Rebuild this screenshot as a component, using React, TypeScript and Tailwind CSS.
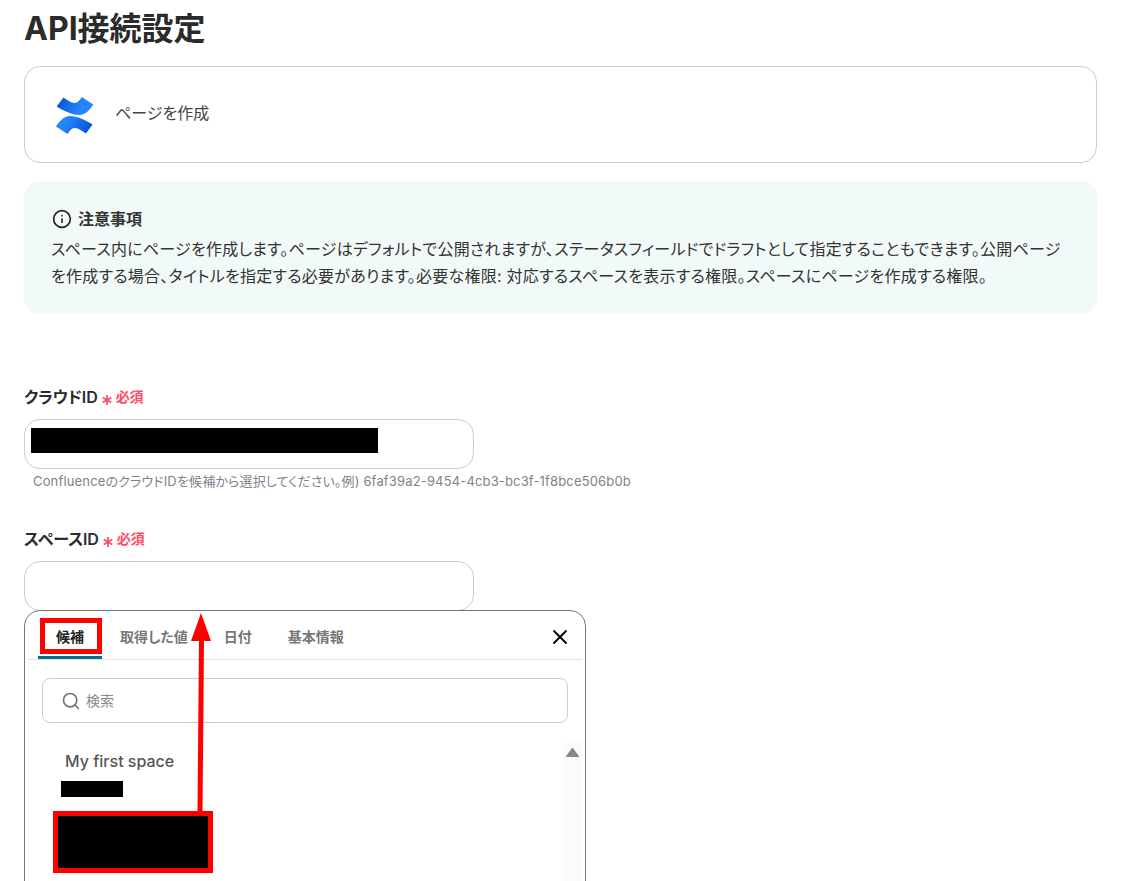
import { Search, X, Info } from "lucide-react";

function Required({ id }: { id: string }) {
  return (
    <div className="flex items-center h-5">
      <span className="text-base font-semibold text-[#2b2b2b] tracking-[-0.1px]">{id}</span>
      <svg width="12" height="12" viewBox="0 0 12 12" className="ml-[3px] mt-[5px]" stroke="#ff4d67" strokeWidth="1.700">
        <path d="M6 1 V11 M1.700 3.500 L10.300 8.500 M10.300 3.500 L1.700 8.500" />
      </svg>
      <span className="ml-[3px] text-sm font-semibold text-[#ff4d67]">必須</span>
    </div>
  );
}

function ConfluenceLogo() {
  return (
    <svg width="40" height="40" viewBox="0 0 40 40" fill="none">
      <defs>
        <linearGradient id="a" x1="36" y1="36" x2="14" y2="24" gradientUnits="userSpaceOnUse">
          <stop stopColor="#0052cc" />
          <stop offset="1" stopColor="#2684ff" />
        </linearGradient>
        <linearGradient id="b" x1="2" y1="4" x2="24" y2="16" gradientUnits="userSpaceOnUse">
          <stop stopColor="#0052cc" />
          <stop offset="1" stopColor="#2684ff" />
        </linearGradient>
      </defs>
      <path d="M37.500 29.500L31 38.500C26.500 35.500 23 32.800 19.500 33C16.500 33.200 14.500 36 12.500 39L1 31.500C4.500 26.500 8.500 21 15 21C22 21 30 25 37.500 29.500Z" fill="url(#a)" />
      <path d="M1.700 11.500L8.300 2.500C12.800 5.500 16.300 8.200 19.800 8C22.800 7.800 24.800 5 26.800 2L38.300 9.500C34.800 14.500 30.800 20 24.300 20C17.300 20 9.300 16 1.700 11.500Z" fill="url(#b)" />
    </svg>
  );
}

export default function App() {
  return (
    <main className="relative h-[881px] w-[1122px] overflow-hidden bg-white px-6 font-['Inter','Noto_Sans_CJK_JP',sans-serif] text-[#2b2b2b] [font-feature-settings:'palt']">
      <h1 className="h-[66px] pt-[9px] text-[32px] leading-10 font-bold">API接続設定</h1>

      <div className="flex h-[97px] w-[1073px] items-center rounded-2xl border border-[#cccccc] pl-[30px]">
        <ConfluenceLogo />
        <span className="ml-[20px] mb-[3px] text-base text-[#444444]">ページを作成</span>
      </div>

      <section className="mt-[18px] h-[133px] w-[1073px] rounded-2xl bg-[#f2faf9] pl-[27px] pr-6 pt-[26px]">
        <div className="flex items-center gap-[6px] pl-px">
          <Info size={20} strokeWidth={2} className="text-[#222222]" />
          <span className="text-base font-semibold text-[#333333]">注意事項</span>
        </div>
        <p className="mt-[5px] text-base leading-[27px] tracking-[0.25px] text-[#333333]">
          スペース内にページを作成します。ページはデフォルトで公開されますが、ステータスフィールドでドラフトとして指定することもできます。公開ページを作成する場合、タイトルを指定する必要があります。必要な権限: 対応するスペースを表示する権限。スペースにページを作成する権限。
        </p>
      </section>

      <div className="mt-[73px]">
        <Required id="クラウドID" />
        <div className="mt-[12px] h-[50px] w-[450px] rounded-2xl border border-[#cccccc] pl-[6px] pt-[8px]">
          <div className="h-[25px] w-[347px] bg-black" />
        </div>
        <p className="mt-[4px] pl-[9px] text-[13px] leading-4 tracking-[0.012em] text-[#7b838b]">
          ConfluenceのクラウドIDを候補から選択してください。例) 6faf39a2-9454-4cb3-bc3f-1f8bce506b0b
        </p>
      </div>

      <div className="mt-[40px]">
        <Required id="スペースID" />
        <div className="mt-[12px] h-[50px] w-[450px] rounded-2xl border border-[#cccccc]" />
      </div>

      <div className="-mt-px h-[300px] w-[562px] rounded-t-2xl border border-[#777777]">
        <div className="mx-[3px] flex h-[49px] items-center border-b border-[#e3e3e3] pt-[3px]">
          <div className="relative flex h-full w-16 items-center justify-center ml-[10px] text-sm font-semibold text-[#222222]">
            候補
            <div className="absolute bottom-0 left-0 right-0 h-[3px] bg-[#0a6d85]" />
          </div>
          <span className="ml-[18px] text-sm font-semibold text-[#777777]">取得した値</span>
          <span className="ml-9 text-sm font-semibold text-[#777777]">日付</span>
          <span className="ml-9 text-sm font-semibold text-[#777777]">基本情報</span>
          <X size={24} strokeWidth={1.8} className="ml-auto mr-[10px] text-black" />
        </div>

        <div className="mx-[17px] mt-[18px] flex h-[45px] w-[526px] items-center rounded-lg border border-[#cccccc] pl-[18px]">
          <Search size={20} strokeWidth={2} className="text-[#777777]" />
          <span className="ml-[5px] text-sm text-[#888888]">検索</span>
        </div>

        <div className="relative mt-[19px] flex">
          <div className="flex-1 pl-[40px] pt-[9px]">
            <p className="text-base leading-5 font-medium text-[#555555]">My first space</p>
            <div className="-ml-1 mt-[10px] h-4 w-[62px] bg-black" />
          </div>
          <div className="mr-[3px] h-[200px] w-[19px] bg-[#fbfbfb] pt-[5px]">
            <svg width="19" height="10" viewBox="0 0 19 10" className="block">
              <path d="M3 10 L9.500 1 L16 10 Z" fill="#888888" stroke="#888888" strokeLinejoin="round" />
            </svg>
          </div>
        </div>
      </div>

      {/* red annotations over the screenshot */}
      <div className="absolute left-[40px] top-[618px] h-[36px] w-[62px] border-[5px] border-[#ff0000]" />
      <div className="absolute left-[53px] top-[811px] h-[62px] w-[160px] border-[5px] border-[#ff0000] bg-black" />
      <svg className="absolute left-[170px] top-[610px]" width="60" height="205" viewBox="0 0 60 205">
        <path d="M31 3 L41 31 L21 31 Z" fill="#ff0000" />
        <path d="M31.500 30 L30 202" stroke="#ff0000" strokeWidth="5" />
      </svg>
    </main>
  );
}
